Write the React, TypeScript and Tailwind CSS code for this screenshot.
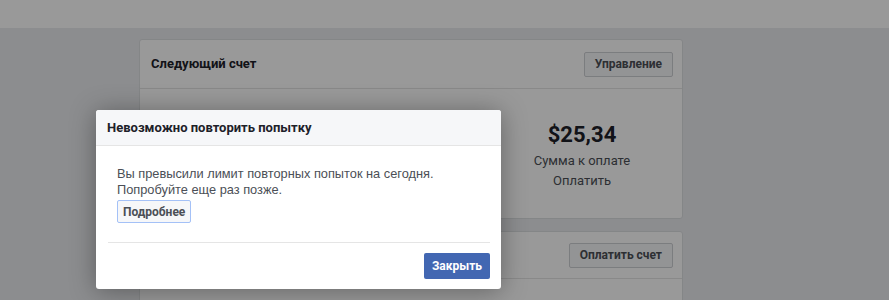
import React from "react";

const font = { fontFamily: 'Roboto, "Liberation Sans", Arial, sans-serif' };
const arial = { fontFamily: '"Liberation Sans", Arial, sans-serif' };

const GrayButton: React.FC<{ label: string; className?: string }> = ({ label, className = "" }) => (
  <button
    className={`h-[25px] px-[10px] rounded-[2px] border border-[#ced0d4] bg-[#f6f7f9] text-[12px] font-bold text-[#4b4f56] ${className}`}
  >
    {label}
  </button>
);

export default function App() {
  return (
    <div className="relative w-[889px] h-[300px] overflow-hidden bg-[#e9ebee]" style={font}>
      <div className="h-[28px] bg-white" />

      <div className="ml-[139px] mt-[11px] w-[544px] flex flex-col gap-[12px]">
        <div className="h-[180px] rounded-[3px] border border-[#dddfe2] bg-white">
          <div className="h-[49px] flex items-center justify-between pl-[11px] pr-[9px] border-b border-[#e5e5e5]">
            <span className="text-[13px] font-bold text-[#1d2129]">Следующий счет</span>
            <GrayButton label="Управление" />
          </div>
          <div className="flex">
            <div className="flex-1" />
            <div className="w-[190px] flex flex-col items-center pt-[33px] mr-[5px]">
              <span className="text-[22px] leading-[26px] font-bold text-[#1d2129]">$25,34</span>
              <span className="mt-[4px] text-[13px] leading-[17px] text-[#4b4f56]">Сумма к оплате</span>
              <span className="mt-[3px] text-[13px] leading-[17px] text-[#4b4f56]">Оплатить</span>
            </div>
          </div>
        </div>

        <div className="h-[120px] rounded-[3px] border border-[#dddfe2] bg-white">
          <div className="h-[47px] flex items-center justify-end pr-[9px] border-b border-[#e5e5e5]">
            <GrayButton label="Оплатить счет" />
          </div>
        </div>
      </div>

      <div className="absolute inset-0 bg-black/40" />

      <div className="absolute left-[96px] top-[110px] w-[405px] bg-white rounded-[3px] shadow-[0_2px_26px_rgba(0,0,0,0.35)]">
        <div className="h-[36px] flex items-center px-[11px] bg-[#f6f7f9] border-b border-[#e5e5e5] rounded-t-[3px]">
          <span className="text-[13px] font-bold text-[#1d2129]">Невозможно повторить попытку</span>
        </div>
        <div className="pl-[12px] pr-[11px]">
          <div className="pt-[20px] pb-[19px] pl-[9px]">
            <p className="text-[12.8px] leading-[16px] text-[#4b4f56]" style={arial}>
              Вы превысили лимит повторных попыток на сегодня.
              <br />
              Попробуйте еще раз позже.
            </p>
            <button className="mt-[2px] h-[23px] px-[5px] rounded-[2px] border border-[#a4c1f7] bg-[#f6f7f9] text-[12px] font-bold text-[#4b4f56]">
              Подробнее
            </button>
          </div>
          <div className="border-t border-[#e5e5e5]" />
          <div className="flex justify-end pt-[10px] pb-[10px]">
            <button className="h-[26px] px-[8px] rounded-[2px] bg-[#4267b2] text-[12px] font-bold text-white">
              Закрыть
            </button>
          </div>
        </div>
      </div>
    </div>
  );
}
